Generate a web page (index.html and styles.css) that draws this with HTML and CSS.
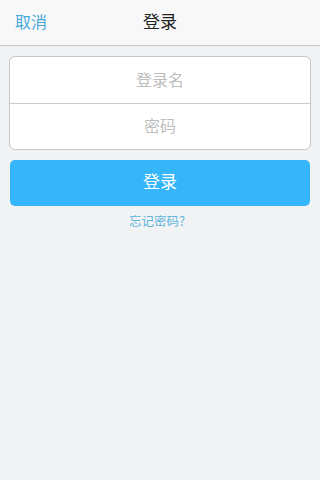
FILE: index.html
```html
<!DOCTYPE html>
<html lang="zh">
<head>
<meta charset="utf-8">
<title>登录</title>
<link rel="stylesheet" href="styles.css">
</head>
<body>
<header class="navbar">
  <span class="nav-left">取消</span>
  <span class="nav-title">登录</span>
  <span class="nav-right"></span>
</header>
<main class="content">
  <div class="form-box">
    <div class="field"><input type="text" placeholder="登录名"></div>
    <div class="field"><input type="password" placeholder="密码"></div>
  </div>
  <button class="login-btn">登录</button>
  <a class="forgot">忘记密码?</a>
</main>
</body>
</html>
```
FILE: styles.css
```css
html, body {
  margin: 0;
  padding: 0;
  height: 100%;
}
body {
  background: #f1f2f4;
  font-family: "Noto Sans CJK SC", "Noto Sans", sans-serif;
}
.navbar {
  height: 46px;
  box-sizing: border-box;
  padding: 0 15px 4px;
  background: #f8f8f8;
  border-bottom: 1px solid #c8c8c8;
  display: grid;
  grid-template-columns: 1fr auto 1fr;
  align-items: center;
}
.nav-left {
  color: #45a8d9;
  font-size: 16px;
  line-height: 1;
}
.nav-title {
  color: #222;
  font-size: 17px;
  line-height: 1;
}
.content {
  padding: 10px 9px 0;
  display: flex;
  flex-direction: column;
  align-items: center;
}
.form-box {
  align-self: stretch;
  background: #fff;
  border: 1px solid #c6c6c6;
  border-radius: 6px;
  overflow: hidden;
}
.field {
  height: 46px;
  display: flex;
}
.field + .field {
  border-top: 1px solid #cacaca;
  height: 45px;
}
.field input {
  flex: 1;
  border: none;
  outline: none;
  background: transparent;
  text-align: center;
  font-family: inherit;
  font-size: 16px;
  color: #333;
  padding: 0 0 3px;
}
.field input::placeholder {
  color: #bdbdbd;
}
.login-btn {
  align-self: stretch;
  margin: 10px 1px 0;
  height: 46px;
  border: none;
  border-radius: 5px;
  background: #35b6fb;
  color: #fff;
  font-family: inherit;
  font-size: 17px;
  padding: 0 0 5px;
}
.forgot {
  margin-top: 7px;
  margin-right: 6px;
  color: #60b6da;
  font-size: 12.5px;
  line-height: 16px;
}
```
